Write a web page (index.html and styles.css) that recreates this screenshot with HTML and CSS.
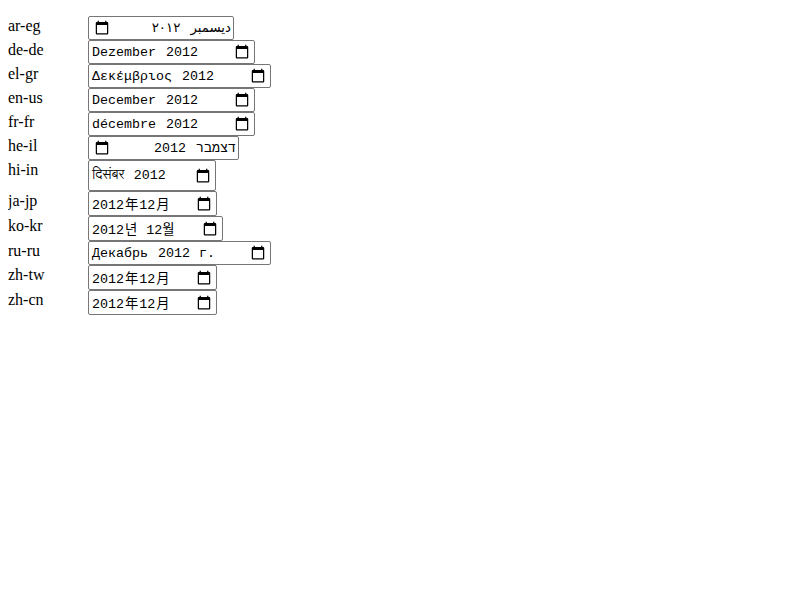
FILE: index.html
```html
<!DOCTYPE html>
<html lang="en">
<head>
<meta charset="utf-8">
<title>Month inputs by locale</title>
<link rel="stylesheet" href="styles.css">
</head>
<body>
<svg width="0" height="0" class="defs"><symbol id="cal" viewBox="0 0 24 24"><path d="M20 3h-1V1h-2v2H7V1H5v2H4c-1.1 0-2 .9-2 2v16c0 1.1.9 2 2 2h16c1.1 0 2-.9 2-2V5c0-1.1-.9-2-2-2zm0 18H4V8h16v13z"/></symbol></svg>
<ul>
<li><span class="name">ar-eg</span><div class="field ar" lang="ar-eg" dir="rtl"><span class="value"><span>ديسمبر</span> <span>٢٠١٢</span></span><svg class="icon"><use href="#cal"/></svg></div></li>
<li><span class="name">de-de</span><div class="field medium" lang="de-de"><span class="value"><span>Dezember</span> <span>2012</span></span><svg class="icon"><use href="#cal"/></svg></div></li>
<li><span class="name">el-gr</span><div class="field wide" lang="el-gr"><span class="value"><span>Δεκέμβριος</span> <span>2012</span></span><svg class="icon"><use href="#cal"/></svg></div></li>
<li><span class="name">en-us</span><div class="field medium" lang="en-us"><span class="value"><span>December</span> <span>2012</span></span><svg class="icon"><use href="#cal"/></svg></div></li>
<li><span class="name">fr-fr</span><div class="field medium" lang="fr-fr"><span class="value"><span>décembre</span> <span>2012</span></span><svg class="icon"><use href="#cal"/></svg></div></li>
<li><span class="name">he-il</span><div class="field he" lang="he-il" dir="rtl"><span class="value"><span>דצמבר</span> <span>2012</span></span><svg class="icon"><use href="#cal"/></svg></div></li>
<li><span class="name">hi-in</span><div class="field hi" lang="hi-in"><span class="value"><span>दिसंबर</span> <span>2012</span></span><svg class="icon"><use href="#cal"/></svg></div></li>
<li><span class="name">ja-jp</span><div class="field cjk" lang="ja-jp"><span class="value"><span>2012</span>年<span>12</span>月</span><svg class="icon"><use href="#cal"/></svg></div></li>
<li><span class="name">ko-kr</span><div class="field cjk ko" lang="ko-kr"><span class="value"><span>2012</span>년 <span>12월</span></span><svg class="icon"><use href="#cal"/></svg></div></li>
<li><span class="name">ru-ru</span><div class="field wide" lang="ru-ru"><span class="value"><span>Декабрь</span> <span>2012</span> г.</span><svg class="icon"><use href="#cal"/></svg></div></li>
<li><span class="name">zh-tw</span><div class="field cjk" lang="zh-tw"><span class="value"><span>2012</span>年<span>12</span>月</span><svg class="icon"><use href="#cal"/></svg></div></li>
<li><span class="name">zh-cn</span><div class="field cjk" lang="zh-cn"><span class="value"><span>2012</span>年<span>12</span>月</span><svg class="icon"><use href="#cal"/></svg></div></li>
</ul>
</body>
</html>
```
FILE: styles.css
```css
body { margin: 16px 8px; font-family: "Liberation Serif", serif; font-size: 16px; line-height: 18px; color: #000; background: #fff; }
.defs { display: none; }
ul { list-style: none; margin: 0; padding: 0; }
li { display: flex; align-items: flex-start; }
.name { width: 80px; padding-top: 1px; }
.field {
  box-sizing: border-box;
  display: flex;
  align-items: center;
  justify-content: space-between;
  height: 24px;
  padding-inline: 2px 4px;
  border: 1px solid #767676;
  border-radius: 2px;
  font: 13.333px/15px "Liberation Mono", monospace;
}
.value { white-space: pre; }
.value span { padding: 0 1px; }
.icon { width: 16px; height: 15px; flex: none; margin-bottom: 1px; }
.medium { width: 167px; }
.wide { width: 183px; }
.ar, .he { padding-inline: 1px 5px; }
.ar { width: 146px; font-family: "DejaVu Sans", sans-serif; }
.ar .value { word-spacing: 3.8px; padding-bottom: 2px; }
.he { width: 151px; }
.hi { width: 128px; height: 31px; font-family: "Liberation Mono", "Lohit Devanagari", "Noto Sans Devanagari", monospace; }
.hi .value { word-spacing: -0.7px; }
.hi .value span:first-child { font-weight: 300; }
.cjk { width: 129px; height: 25px; font-family: "Liberation Mono", "Noto Sans CJK JP", monospace; }
.cjk .value { padding-top: 4px; }
.cjk .icon, .hi .icon { margin-bottom: 0; }
.ko { width: 135px; font-family: "Liberation Mono", "Noto Sans CJK KR", monospace; }
```
